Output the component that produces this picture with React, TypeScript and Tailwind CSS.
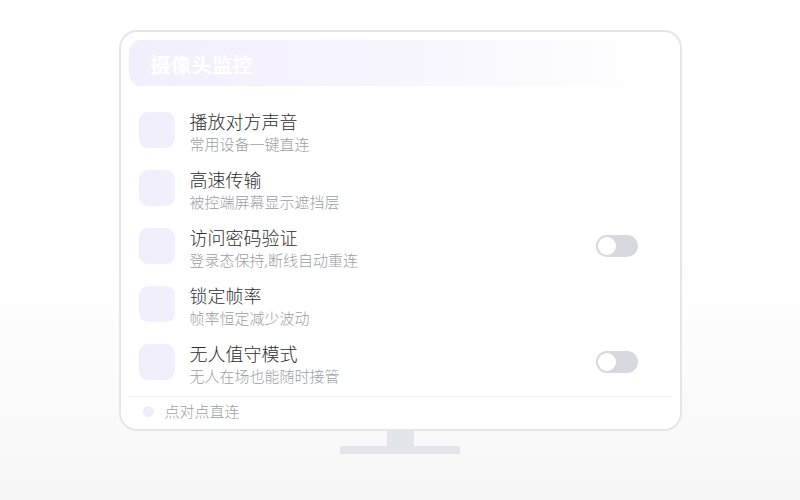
import React from 'react'

const rows = [
  { title: '播放对方声音', desc: '常用设备一键直连', toggle: false },
  { title: '高速传输', desc: '被控端屏幕显示遮挡层', toggle: false },
  { title: '访问密码验证', desc: '登录态保持,断线自动重连', toggle: true },
  { title: '锁定帧率', desc: '帧率恒定减少波动', toggle: false },
  { title: '无人值守模式', desc: '无人在场也能随时接管', toggle: true },
]

const Toggle = () => (
  <div className="mr-[24px] flex h-[22px] w-[42px] items-center rounded-full bg-[#d7d9de] px-[2px]">
    <div className="h-[18px] w-[18px] rounded-full bg-white" />
  </div>
)

export default function App() {
  return (
    <div
      className="flex h-[500px] w-[800px] flex-col items-center bg-gradient-to-b from-white via-white to-[#f7f7f8] pt-[30px]"
      style={{ fontFamily: '"Noto Sans", "Noto Sans CJK SC", sans-serif' }}
    >
      {/* Screen */}
      <div className="flex h-[401px] w-[563px] flex-col rounded-[18px] border-2 border-[#e4e6ea] bg-white p-[8px]">
        {/* Header */}
        <div className="flex h-[46px] shrink-0 items-center rounded-[12px] bg-gradient-to-r from-[#f2effd] via-[#f7f5fe] to-white pl-[22px] pt-[6px]">
          <span className="text-[20px] font-bold tracking-[0.5px] text-white">摄像头监控</span>
        </div>

        {/* Rows */}
        <div className="mt-[15px] flex flex-col">
          {rows.map((row) => (
            <div key={row.title} className="flex h-[58px] items-center px-[10px]">
              <div className="h-[36px] w-[36px] shrink-0 rounded-[9px] bg-[#f2effd]" />
              <div className="ml-[15px] flex flex-1 flex-col pt-[4px]">
                <span className="text-[18px] font-light leading-[22px] text-[#2e2e2e]">{row.title}</span>
                <span className="mt-[1px] text-[15px] font-light leading-[20px] text-[#9a9ea6]">{row.desc}</span>
              </div>
              {row.toggle && <Toggle />}
            </div>
          ))}
        </div>

        {/* Footer */}
        <div className="mt-[5px] border-t border-[#eeeff2]" />
        <div className="flex flex-1 items-center pl-[14px] pt-[3px]">
          <div className="h-[11px] w-[11px] rounded-full bg-[#efecfd]" />
          <span className="ml-[11px] text-[15px] font-light text-[#9da1a8]">点对点直连</span>
        </div>
      </div>

      {/* Stand */}
      <div className="h-[15px] w-[27px] bg-[#e2e5ea]" />
      <div className="h-[8px] w-[120px] bg-[#e2e5ea]" />
    </div>
  )
}
